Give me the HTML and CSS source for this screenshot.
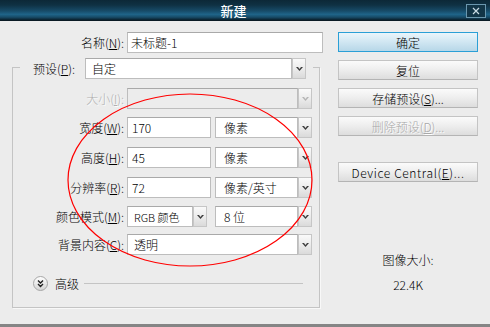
FILE: index.html
```html
<!DOCTYPE html>
<html lang="zh-CN">
<head>
<meta charset="utf-8">
<title>新建</title>
<link rel="stylesheet" href="styles.css">
</head>
<body>
<div class="window">
  <div class="titlebar">
    <span class="title">新建</span>
    <span class="close"><svg width="8" height="8" viewBox="0 0 8 8"><path d="M1 1L7 7M7 1L1 7" stroke="#c9dbe4" stroke-width="1.2" fill="none"/></svg></span>
  </div>
  <div class="content">
    <div class="main">
      <div class="name-row">
        <span class="lbl">名称(<u>N</u>):</span>
        <div class="field name-field">未标题-1</div>
      </div>
      <div class="group">
        <div class="preset-row">
          <span class="plbl">预设(<u>P</u>):</span>
          <div class="field sel preset-sel">自定</div>
          <span class="ddbtn"><svg width="7" height="4" viewBox="0 0 7 4"><path d="M0 0h2l1.5 2 1.5-2h2l-3.5 4z" fill="#3c3c3c"/></svg></span>
        </div>
        <div class="rows">
          <div class="row">
            <span class="lbl2 disabled">大小(<u>I</u>):</span>
            <div class="field sel wide disabled-field"></div>
            <span class="ddbtn off"><svg width="7" height="4" viewBox="0 0 7 4"><path d="M0 0h2l1.5 2 1.5-2h2l-3.5 4z" fill="#b4b4b4"/></svg></span>
          </div>
          <div class="row">
            <span class="lbl2">宽度(<u>W</u>):</span>
            <div class="field num">170</div>
            <div class="field sel unit">像素</div>
            <span class="ddbtn"><svg width="7" height="4" viewBox="0 0 7 4"><path d="M0 0h2l1.5 2 1.5-2h2l-3.5 4z" fill="#3c3c3c"/></svg></span>
          </div>
          <div class="row">
            <span class="lbl2">高度(<u>H</u>):</span>
            <div class="field num">45</div>
            <div class="field sel unit">像素</div>
            <span class="ddbtn"><svg width="7" height="4" viewBox="0 0 7 4"><path d="M0 0h2l1.5 2 1.5-2h2l-3.5 4z" fill="#3c3c3c"/></svg></span>
          </div>
          <div class="row">
            <span class="lbl2">分辨率(<u>R</u>):</span>
            <div class="field num">72</div>
            <div class="field sel unit">像素/英寸</div>
            <span class="ddbtn"><svg width="7" height="4" viewBox="0 0 7 4"><path d="M0 0h2l1.5 2 1.5-2h2l-3.5 4z" fill="#3c3c3c"/></svg></span>
          </div>
          <div class="row">
            <span class="lbl2">颜色模式(<u>M</u>):</span>
            <div class="field sel mode">RGB 颜色</div>
            <span class="ddbtn"><svg width="7" height="4" viewBox="0 0 7 4"><path d="M0 0h2l1.5 2 1.5-2h2l-3.5 4z" fill="#3c3c3c"/></svg></span>
            <div class="field sel unit bits">8 位</div>
            <span class="ddbtn"><svg width="7" height="4" viewBox="0 0 7 4"><path d="M0 0h2l1.5 2 1.5-2h2l-3.5 4z" fill="#3c3c3c"/></svg></span>
          </div>
          <div class="row">
            <span class="lbl2">背景内容(<u>C</u>):</span>
            <div class="field sel wide">透明</div>
            <span class="ddbtn"><svg width="7" height="4" viewBox="0 0 7 4"><path d="M0 0h2l1.5 2 1.5-2h2l-3.5 4z" fill="#3c3c3c"/></svg></span>
          </div>
        </div>
        <div class="advanced">
          <svg class="adv-icon" width="15" height="15" viewBox="0 0 15 15">
            <defs><linearGradient id="g" x1="0" y1="0" x2="0" y2="1"><stop offset="0" stop-color="#ffffff"/><stop offset="1" stop-color="#d4d4d4"/></linearGradient></defs>
            <circle cx="7.5" cy="7.5" r="7" fill="url(#g)" stroke="#a6a6a6"/>
            <path d="M5 4.5L7.5 7 10 4.5M5 8L7.5 10.5 10 8" stroke="#222" stroke-width="1.4" fill="none"/>
          </svg>
          <span class="adv-text">高级</span>
          <span class="adv-line"></span>
        </div>
      </div>
    </div>
    <div class="side">
      <div class="btn primary">确定</div>
      <div class="btn">复位</div>
      <div class="btn">存储预设(<u>S</u>)...</div>
      <div class="btn btn-disabled">删除预设(<u>D</u>)...</div>
      <div class="btn device">Device Central(<u>E</u>)...</div>
      <div class="info">
        <div class="info-label">图像大小:</div>
        <div class="info-value">22.4K</div>
      </div>
    </div>
  </div>
  <svg class="ellipse" width="490" height="327" viewBox="0 0 490 327"><ellipse cx="190" cy="180" rx="122" ry="86" fill="none" stroke="#ff0000" stroke-width="1.2"/></svg>
</div>
</body>
</html>
```

FILE: styles.css
```css
* { box-sizing: border-box; }
html, body { margin: 0; padding: 0; background: #ececec; }
.window {
  position: relative;
  width: 490px;
  height: 327px;
  overflow: hidden;
  background: #ececec;
  border-bottom: 3px solid #858585;
  font-family: "Noto Sans CJK SC", "Noto Sans", sans-serif;
  font-size: 12px;
  font-weight: 300;
  color: #000;
}
u { text-decoration: underline; text-underline-offset: 1px; }

.titlebar {
  height: 21px;
  display: flex;
  align-items: center;
  background: linear-gradient(to bottom, #0c2837 0%, #0f3143 25%, #174c69 55%, #1f6489 72%, #174b67 86%, #0a1f2b 100%);
  border-bottom: 1px solid #0a1a24;
  position: relative;
}
.title {
  width: 467px;
  text-align: center;
  color: #fff;
  font-weight: 500;
  font-size: 13px;
}
.close {
  position: absolute;
  left: 466px;
  top: 4px;
  width: 20px;
  height: 14px;
  border: 1px solid #6a97ae;
  background: #123547;
  display: flex;
  align-items: center;
  justify-content: center;
}

.content { display: flex; }
.main { width: 323px; }

.name-row {
  display: flex;
  margin-top: 11px;
  height: 21px;
  align-items: center;
}
.lbl { width: 124px; text-align: right; }
.field {
  height: 21px;
  background: #fff;
  border: 1px solid #bdbdbd;
  border-top-color: #a9a9a9;
  display: flex;
  align-items: center;
  padding-left: 4px;
  white-space: nowrap;
}
.name-field { margin-left: 3px; width: 196px; padding-left: 3px; }

.group {
  margin-left: 12px;
  margin-top: 14px;
  width: 308px;
  height: 241px;
  border: 1px solid #c4c4c4;
  box-shadow: 1px 1px 0 #f8f8f8;
}
.preset-row {
  display: flex;
  align-items: center;
  margin-top: -10px;
  margin-left: 7px;
  width: 293px;
  height: 21px;
  padding: 0 7px 0 13px;
  background: #ececec;
}
.plbl { width: 52px; }
.preset-sel { width: 207px; padding-left: 6px; }

.ddbtn {
  width: 14px;
  height: 21px;
  flex: none;
  border: 1px solid #c6c6c6;
  background: linear-gradient(to bottom, #fafafa 0%, #ececec 50%, #dadada 100%);
  display: flex;
  align-items: center;
  justify-content: center;
}

.rows {
  margin-top: 9px;
  display: grid;
  grid-template-rows: 29px 30px 30px 29px 28px 21px;
}
.row { display: flex; align-items: flex-start; height: 21px; }
.lbl2 { width: 111px; text-align: right; align-self: center; margin-right: 3px; }
.disabled { color: #b0b0b0; text-shadow: 1px 1px 0 #fbfbfb; }
.sel { padding-left: 6px; }
.wide { width: 171px; }
.disabled-field { background: #ececec; }
.num { width: 84px; }
.unit { width: 83px; margin-left: 4px; padding-left: 8px; }
.mode { width: 66px; font-size: 11px; }
.bits { margin-left: 8px; }

.advanced {
  display: flex;
  align-items: center;
  margin-top: 21px;
  margin-left: 20px;
  height: 15px;
}
.adv-icon { flex: none; }
.adv-text { margin-left: 7px; }
.adv-line {
  margin-left: 5px;
  width: 219px;
  height: 1px;
  background: #c4c4c4;
}

.side {
  margin-left: 15px;
  width: 140px;
  padding-top: 11px;
  display: flex;
  flex-direction: column;
  gap: 8px;
}
.btn {
  height: 20px;
  border: 1px solid #c4c4c4;
  border-bottom-color: #b4b4b4;
  background: linear-gradient(to bottom, #fbfbfb 0%, #efefef 45%, #dddddd 100%);
  display: flex;
  align-items: center;
  justify-content: center;
  white-space: nowrap;
}
.primary {
  border: 1px solid #2a9fd6;
  background: linear-gradient(to bottom, #eaf5fb 0%, #d3e8f3 45%, #b7d7e8 100%);
}
.btn-disabled { color: #a8a8a8; text-shadow: 1px 1px 0 #fff; }
.device { margin-top: 18px; letter-spacing: 0.6px; }
.info { margin-top: 62px; text-align: center; }
.info-label { line-height: 16px; }
.info-value { line-height: 16px; margin-top: 9px; }

.ellipse {
  position: absolute;
  left: 0;
  top: 0;
  pointer-events: none;
}
```
